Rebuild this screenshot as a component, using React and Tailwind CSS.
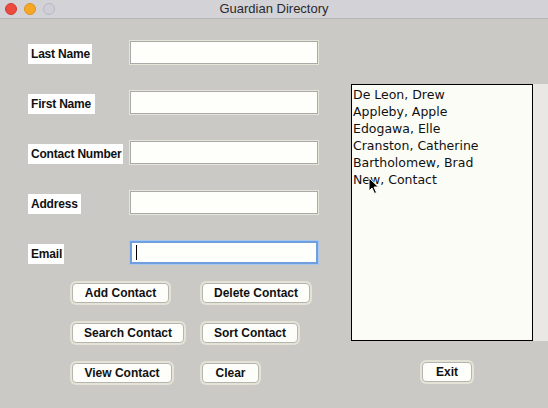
import React from 'react';

const fields = [
  { label: 'Last Name', w: 'w-[64px]' },
  { label: 'First Name', w: 'w-[67px]' },
  { label: 'Contact Number', w: 'w-[95px]' },
  { label: 'Address', w: 'w-[53px]' },
  { label: 'Email', w: 'w-[36px]', focused: true },
];

const contacts = [
  'De Leon, Drew',
  'Appleby, Apple',
  'Edogawa, Elle',
  'Cranston, Catherine',
  'Bartholomew, Brad',
  'New, Contact',
];

const Btn = ({ children, w }) => (
  <div className="w-fit p-[2px] rounded-[6px] bg-[#e4e3d6]">
    <button
      className={`${w} h-[20px] rounded-[4px] bg-[#fdfdf9] border border-[#b4b4b0] text-[12px] font-bold text-[#111] leading-none flex items-center justify-center`}
    >
      {children}
    </button>
  </div>
);

const App = () => {
  return (
    <div className="relative w-[548px] h-[408px] bg-[#cac9c5] overflow-hidden flex flex-col font-['Liberation_Sans',Arial,sans-serif]">
      <div className="h-[19px] bg-[#d3d2d7] border-b border-[#b8b7b9] flex items-center relative shrink-0">
        <div className="flex items-center gap-[7px] pl-[5px]">
          <span className="w-[12px] h-[12px] rounded-full bg-[#ec4a3e] border border-[#d33a30]" />
          <span className="w-[12px] h-[12px] rounded-full bg-[#f6a726] border border-[#dd9220]" />
          <span className="w-[12px] h-[12px] rounded-full bg-[#cfced6] border border-[#b9b8c2]" />
        </div>
        <div className="absolute inset-0 flex items-center justify-center text-[13px] text-[#2a2a2a]">
          Guardian Directory
        </div>
      </div>

      <div className="flex flex-1">
        <div className="w-[351px] shrink-0 pt-[21px]">
          <div className="flex flex-col gap-[25px]">
            {fields.map((f) => (
              <div key={f.label} className="flex items-start h-[25px] pl-[28px]">
                <div className={`${f.w} h-[20px] mt-[4px] bg-white flex items-center pl-[3px] text-[12px] font-bold text-[#111] whitespace-nowrap tracking-[-0.2px]`}>
                  {f.label}
                </div>
                <div className="flex-1" />
                <div
                  className={`w-[190px] h-[25px] mr-[32px] p-[1px] ${f.focused ? 'bg-[#a9c6ee]' : 'bg-[#e6e5da]'}`}
                >
                  <div
                    className={`w-full h-full bg-[#fefefa] border ${f.focused ? 'border-[#6f9fdd] border-2' : 'border-[#a9a9a7]'} flex items-center pl-[4px]`}
                  >
                    {f.focused && <span className="w-[1px] h-[15px] bg-black" />}
                  </div>
                </div>
              </div>
            ))}
          </div>

          <div className="flex flex-col gap-[16px] mt-[16px] pl-[70px]">
            <div className="flex gap-[29px]">
              <Btn w="w-[97px]">Add Contact</Btn>
              <Btn w="w-[108px]">Delete Contact</Btn>
            </div>
            <div className="flex gap-[14px]">
              <Btn w="w-[112px]">Search Contact</Btn>
              <Btn w="w-[96px]">Sort Contact</Btn>
            </div>
            <div className="flex gap-[26px]">
              <Btn w="w-[100px]">View Contact</Btn>
              <Btn w="w-[57px]">Clear</Btn>
            </div>
          </div>
        </div>

        <div className="flex-1 pt-[65px] flex flex-col">
          <div className="flex">
            <div className="w-[182px] h-[257px] bg-[#fcfcf7] border border-black pl-[1px] pt-[1px] font-['DejaVu_Sans',sans-serif] text-[12.5px] leading-[17px] text-[#111]">
              {contacts.map((c) => (
                <div key={c}>{c}</div>
              ))}
            </div>
            <div className="flex-1 h-[257px] bg-[#e9e8e4]" />
          </div>
          <div className="pl-[69px] mt-[19px]">
            <Btn w="w-[50px]">Exit</Btn>
          </div>
        </div>
      </div>

      {/* mouse pointer */}
      <svg className="absolute left-[368px] top-[177px]" width="12" height="18" viewBox="0 0 12 18">
        <path d="M1 1 L1 14 L4 11 L6.5 16.5 L8.5 15.5 L6 10 L10.5 10 Z" fill="#000" stroke="#fff" strokeWidth="1" />
      </svg>
    </div>
  );
};

export default App;
